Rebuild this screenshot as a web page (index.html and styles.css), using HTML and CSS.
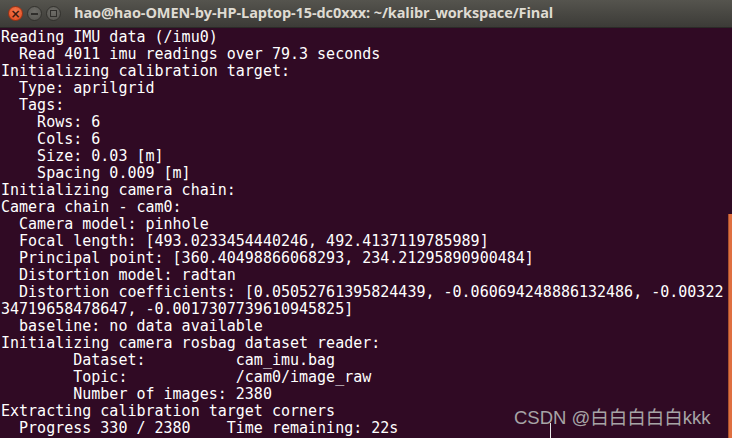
FILE: index.html
```html
<!DOCTYPE html>
<html lang="en">
<head>
    <meta charset="UTF-8">
    <title>Terminal</title>
    <link rel="stylesheet" href="styles.css">
</head>
<body>
    <div class="window">
        <div class="titlebar">
            <div class="buttons">
                <span class="btn close">&#215;</span>
                <span class="btn min"><i class="bar"></i></span>
                <span class="btn max"><i class="box"></i></span>
            </div>
            <div class="title">hao@hao-OMEN-by-HP-Laptop-15-dc0xxx: ~/kalibr_workspace/Final</div>
        </div>
        <div class="terminal">
<pre class="output">Reading IMU data (/imu0)
  Read 4011 imu readings over 79.3 seconds
Initializing calibration target:
  Type: aprilgrid
  Tags:
    Rows: 6
    Cols: 6
    Size: 0.03 [m]
    Spacing 0.009 [m]
Initializing camera chain:
Camera chain - cam0:
  Camera model: pinhole
  Focal length: [493.0233454440246, 492.4137119785989]
  Principal point: [360.40498866068293, 234.21295890900484]
  Distortion model: radtan
  Distortion coefficients: [0.05052761395824439, -0.060694248886132486, -0.00322
34719658478647, -0.0017307739610945825]
  baseline: no data available
Initializing camera rosbag dataset reader:
        Dataset:          cam_imu.bag
        Topic:            /cam0/image_raw
        Number of images: 2380
Extracting calibration target corners
  Progress 330 / 2380    Time remaining: 22s</pre>
            <div class="scrollbar"></div>
            <div class="watermark">CSDN @白白白白白kkk</div>
            <div class="cursor"></div>
        </div>
    </div>
</body>
</html>
```

FILE: styles.css
```css
html, body { margin: 0; padding: 0; background-color: #300a24; }
.window { width: 732px; height: 438px; overflow: hidden; display: flex; flex-direction: column; }
.titlebar { height: 28px; flex: none; display: flex; align-items: center; background: linear-gradient(#55544e, #3c3b37); border-bottom: 1px solid #2b2a27; box-sizing: border-box; }
.buttons { display: flex; gap: 4px; padding-left: 8px; width: 66px; flex: none; }
.btn { width: 15px; height: 15px; border-radius: 50%; box-sizing: border-box; display: flex; align-items: center; justify-content: center; }
.close { background: radial-gradient(circle at 50% 35%, #f47a4f, #e0481c); border: 1px solid #9c3214; color: #3b1a10; font: bold 12px/1 "DejaVu Sans", sans-serif; }
.min, .max { background: radial-gradient(circle at 50% 35%, #6e6d68, #55544f); border: 1px solid #33322e; }
.bar { display: block; width: 7px; height: 2px; background: #2f2e2b; }
.box { display: block; width: 5px; height: 5px; border: 1px solid #2f2e2b; }
.title { color: #dfdbd2; font: bold 14.5px/1 "Open Sans", "DejaVu Sans", sans-serif; white-space: nowrap; letter-spacing: -0.1px; }
.terminal { flex: 1; position: relative; padding: 1px 0 0 1px; }
.output { margin: 0; color: #ffffff; font: 15px/17px "DejaVu Sans Mono", monospace; white-space: pre; }
.scrollbar { position: absolute; right: 0; top: 186px; bottom: 0; width: 3px; background: #df6f40; border-left: 1px solid #a8502e; }
.watermark { position: absolute; left: 514px; top: 380px; color: #a7a4a6; font: 18.5px/20px "Liberation Sans", "Noto Sans CJK SC", sans-serif; }
.cursor { position: absolute; left: 550px; top: 395px; width: 1px; height: 15px; background: #e8e8e8; }
```
